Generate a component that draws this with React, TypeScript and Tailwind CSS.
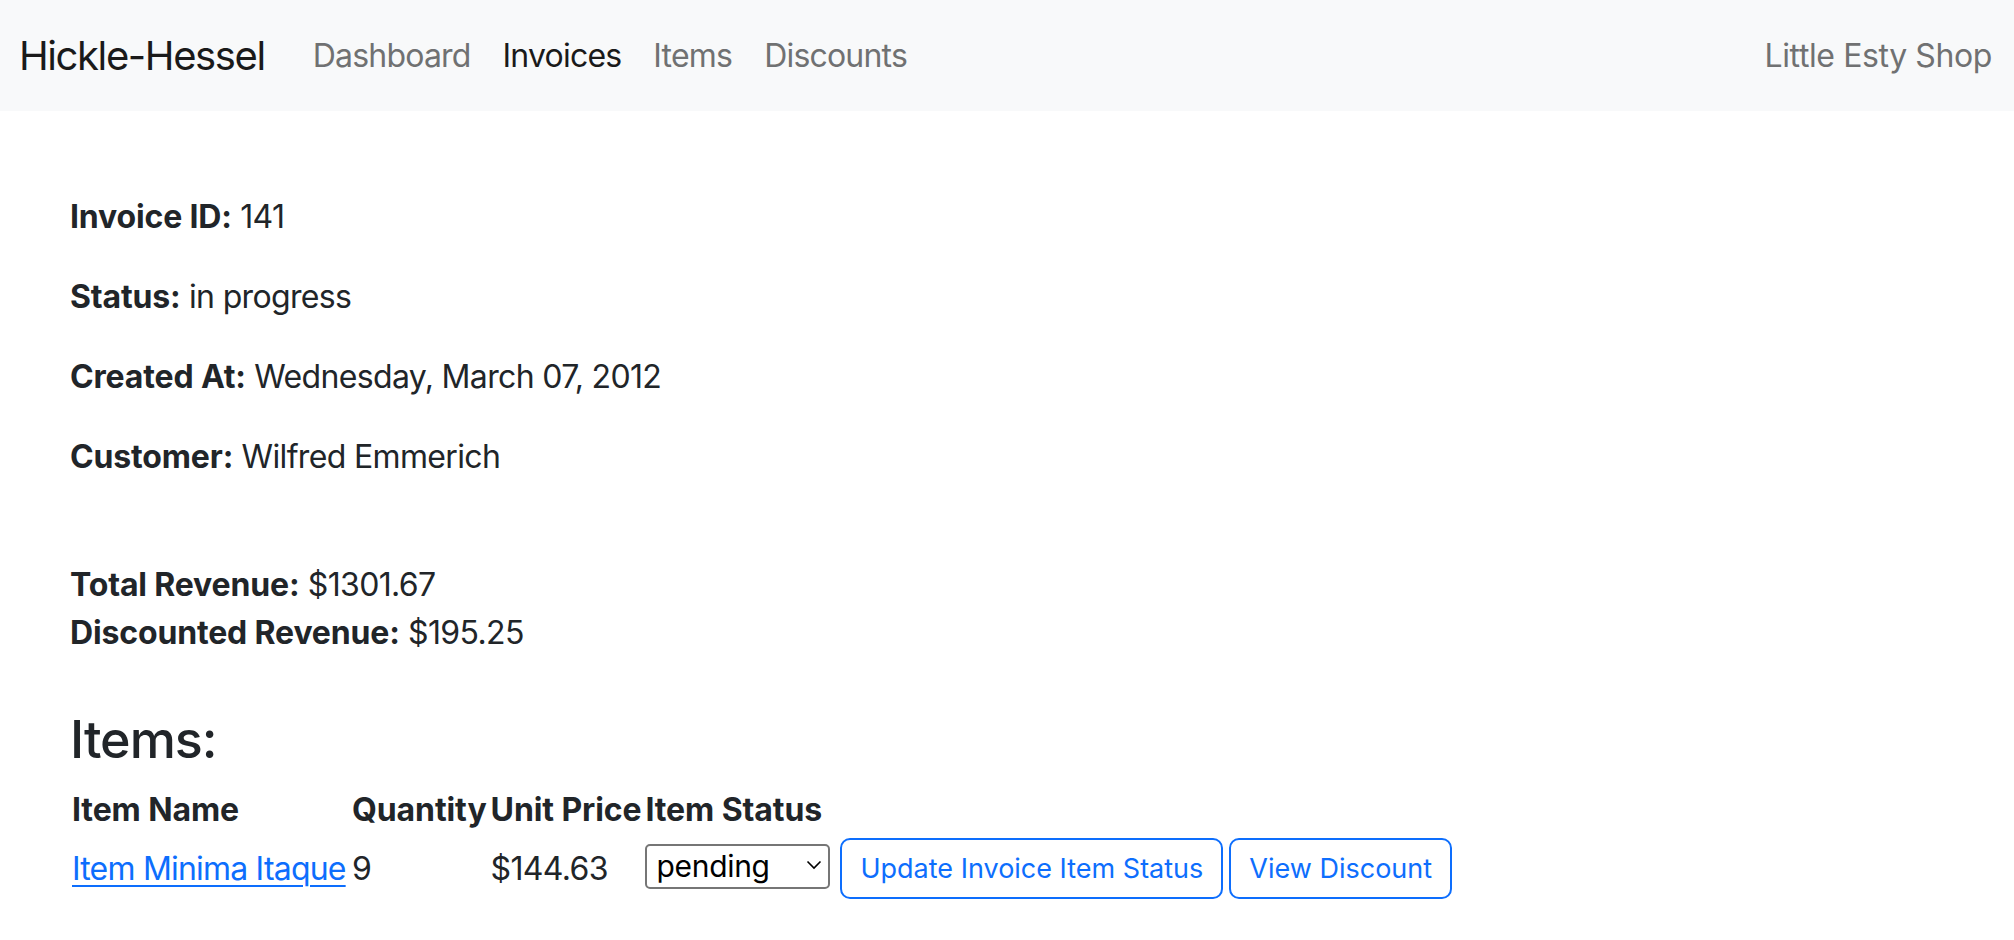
const navLinks = [
  { label: "Dashboard", active: false },
  { label: "Invoices", active: true },
  { label: "Items", active: false },
  { label: "Discounts", active: false },
];

const details = [
  { label: "Invoice ID:", value: "141" },
  { label: "Status:", value: "in progress" },
  { label: "Created At:", value: "Wednesday, March 07, 2012" },
  { label: "Customer:", value: "Wilfred Emmerich" },
];

export default function App() {
  return (
    <div className="min-h-screen bg-white font-['Inter',sans-serif] text-[#212529]">
      <nav className="flex h-[111px] items-center bg-[#f8f9fa] pl-[19px] pr-[22px]">
        <a className="mr-[32px] text-[40px] leading-[60px] tracking-[-1.4px] text-[#1a1a1a]" href="#">
          Hickle-Hessel
        </a>
        <ul className="flex">
          {navLinks.map((l) => (
            <li key={l.label}>
              <a
                href="#"
                className={`block px-[16px] text-[32px] leading-[48px] tracking-[-0.8px] ${
                  l.active ? "text-[#1a1a1a]" : "text-[#707172]"
                }`}>
                {l.label}
              </a>
            </li>
          ))}
        </ul>
        <span className="ml-auto text-[32px] leading-[48px] tracking-[-0.4px] text-[#707172]">
          Little Esty Shop
        </span>
      </nav>

      <main className="pl-[70px] pt-[82px] text-[32px] leading-[48px] tracking-[-0.65px]">
        {details.map((d, i) => (
          <p key={d.label} className={i === details.length - 1 ? "mb-[80px]" : "mb-[32px]"}>
            <strong className="font-bold tracking-[-0.15px]">{d.label}</strong> {d.value}
          </p>
        ))}

        <p className="mb-[49px]">
          <strong className="font-bold tracking-[-0.15px]">Total Revenue:</strong> $1301.67
          <br />
          <strong className="font-bold tracking-[-0.15px]">Discounted Revenue:</strong> $195.25
        </p>

        <h3 className="mb-[11px] text-[52px] leading-[67px] font-medium tracking-[-1px]">Items:</h3>

        <table className="border-collapse">
          <thead>
            <tr>
              <th className="w-[280px] px-[2px] py-[2px] text-left font-bold tracking-[-0.1px] whitespace-nowrap">
                Item Name
              </th>
              <th className="w-[137px] px-[2px] py-[2px] text-left font-bold tracking-[-0.1px] whitespace-nowrap">
                Quantity
              </th>
              <th className="w-[154px] px-[2px] py-[2px] text-left font-bold tracking-[-0.1px] whitespace-nowrap">
                Unit Price
              </th>
              <th className="px-[2px] py-[2px] text-left font-bold tracking-[-0.1px] whitespace-nowrap">
                Item Status
              </th>
              <th className="px-[2px] py-[2px]"></th>
            </tr>
          </thead>
          <tbody>
            <tr>
              <td className="px-[2px] py-[2px] align-middle whitespace-nowrap">
                <a
                  href="#"
                  className="tracking-[-0.8px] text-[#0d6efd] underline decoration-2 underline-offset-[5px]">
                  Item Minima Itaque
                </a>
              </td>
              <td className="px-[2px] py-[2px] align-middle">9</td>
              <td className="px-[2px] py-[2px] align-middle">$144.63</td>
              <td className="px-[2px] py-[2px] align-middle">
                <span className="relative mb-[5px] inline-block align-middle">
                  <select
                    defaultValue="pending"
                    className="h-[45px] w-[185px] appearance-none rounded-[5px] border-2 border-[#767676] bg-white pl-[9px] text-[30px] leading-[40px] tracking-[-0.3px] text-black">
                    <option value="pending">pending</option>
                    <option value="packaged">packaged</option>
                    <option value="shipped">shipped</option>
                  </select>
                  <svg
                    className="pointer-events-none absolute right-[8px] top-[18px]"
                    width="16"
                    height="10"
                    viewBox="0 0 16 10"
                    fill="none"
                    stroke="#000"
                    strokeWidth="1.6">
                    <path d="M1.5 1.5 L8 8 L14.5 1.5" />
                  </svg>
                </span>
              </td>
              <td className="px-[2px] py-[2px] align-middle">
                <div className="flex gap-[6px] pl-[6px]">
                  <button className="h-[61px] rounded-[10px] border-2 border-[#0d6efd] bg-white px-[18px] text-[27px] tracking-[0px] text-[#0d6efd]">
                    Update Invoice Item Status
                  </button>
                  <button className="h-[61px] rounded-[10px] border-2 border-[#0d6efd] bg-white px-[18px] text-[27px] tracking-[0px] text-[#0d6efd]">
                    View Discount
                  </button>
                </div>
              </td>
            </tr>
          </tbody>
        </table>
      </main>
    </div>
  );
}
